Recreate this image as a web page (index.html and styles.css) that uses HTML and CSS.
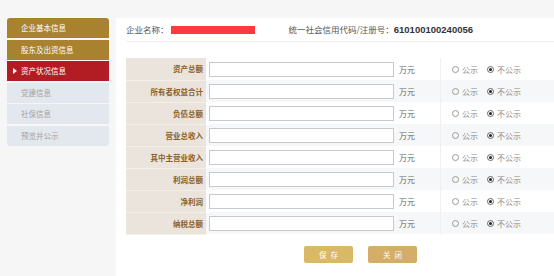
FILE: index.html
```html
<!DOCTYPE html>
<html lang="zh-CN">
<head>
    <meta charset="UTF-8">
    <title>资产状况信息</title>
    <link rel="stylesheet" href="styles.css">
</head>
<body>
    <div class="page">
        <ul class="side-menu">
            <li class="menu-item done">企业基本信息</li>
            <li class="menu-item done">股东及出资信息</li>
            <li class="menu-item active">资产状况信息</li>
            <li class="menu-item">党建信息</li>
            <li class="menu-item">社保信息</li>
            <li class="menu-item">预览并公示</li>
        </ul>
        <div class="main">
            <div class="info-bar">
                <span class="label">企业名称：</span><span class="masked"></span>
                <span class="label code-label">统一社会信用代码/注册号：</span><span class="code">610100100240056</span>
            </div>
            <table class="asset-table">
                <tr>
                    <th>资产总额</th>
                    <td class="amount"><input type="text"><span class="unit">万元</span></td>
                    <td class="publish"><span class="radio"></span>公示<span class="radio checked"></span>不公示</td>
                </tr>
                <tr>
                    <th>所有者权益合计</th>
                    <td class="amount"><input type="text"><span class="unit">万元</span></td>
                    <td class="publish"><span class="radio"></span>公示<span class="radio checked"></span>不公示</td>
                </tr>
                <tr>
                    <th>负债总额</th>
                    <td class="amount"><input type="text"><span class="unit">万元</span></td>
                    <td class="publish"><span class="radio"></span>公示<span class="radio checked"></span>不公示</td>
                </tr>
                <tr>
                    <th>营业总收入</th>
                    <td class="amount"><input type="text"><span class="unit">万元</span></td>
                    <td class="publish"><span class="radio"></span>公示<span class="radio checked"></span>不公示</td>
                </tr>
                <tr>
                    <th>其中主营业收入</th>
                    <td class="amount"><input type="text"><span class="unit">万元</span></td>
                    <td class="publish"><span class="radio"></span>公示<span class="radio checked"></span>不公示</td>
                </tr>
                <tr>
                    <th>利润总额</th>
                    <td class="amount"><input type="text"><span class="unit">万元</span></td>
                    <td class="publish"><span class="radio"></span>公示<span class="radio checked"></span>不公示</td>
                </tr>
                <tr>
                    <th>净利润</th>
                    <td class="amount"><input type="text"><span class="unit">万元</span></td>
                    <td class="publish"><span class="radio"></span>公示<span class="radio checked"></span>不公示</td>
                </tr>
                <tr>
                    <th>纳税总额</th>
                    <td class="amount"><input type="text"><span class="unit">万元</span></td>
                    <td class="publish"><span class="radio"></span>公示<span class="radio checked"></span>不公示</td>
                </tr>
            </table>
            <div class="actions">
                <button class="btn btn-save">保存</button>
                <button class="btn btn-close">关闭</button>
            </div>
        </div>
    </div>
</body>
</html>
```

FILE: styles.css
```css
html, body {
    margin: 0;
    height: 100%;
    overflow: hidden;
}

body {
    font-family: "Noto Sans CJK SC", "Liberation Sans", sans-serif;
    background: #f6f6f6;
    color: #555;
}

.page {
    display: flex;
    align-items: flex-start;
    padding: 18px 0 0 7px;
    height: 100%;
    box-sizing: border-box;
}

.side-menu {
    list-style: none;
    margin: 0 7px 0 0;
    padding: 0;
    width: 102px;
    flex-shrink: 0;
    border-radius: 3px;
    overflow: hidden;
}

.menu-item {
    height: 20px;
    line-height: 20px;
    margin-bottom: 1.5px;
    padding-left: 14px;
    font-size: 7.5px;
    background: #e3e7ee;
    color: #a3a3a3;
    position: relative;
}

.menu-item:last-child {
    margin-bottom: 0;
}

.menu-item.done {
    background: #a9822f;
    color: #fff;
}

.menu-item.active {
    background: #b11d22;
    color: #fff;
}

.menu-item.active::before {
    content: "";
    position: absolute;
    left: 6px;
    top: 7px;
    border-left: 4px solid #fff;
    border-top: 3px solid transparent;
    border-bottom: 3px solid transparent;
}

.main {
    flex: 1;
    background: #fff;
    height: 100%;
    padding-left: 10px;
    overflow: hidden;
}

.info-bar {
    height: 23px;
    line-height: 23px;
    border-bottom: 1px solid #eeeeee;
    font-size: 8.5px;
    white-space: nowrap;
    color: #555;
}

.masked {
    display: inline-block;
    width: 84px;
    height: 8px;
    background: #ff3a3a;
    vertical-align: -1px;
    margin-left: 2px;
}

.code-label {
    margin-left: 32px;
}

.code {
    font-family: "Liberation Sans", sans-serif;
    font-weight: bold;
    font-size: 9.5px;
    color: #333;
}

.asset-table {
    margin-top: 16px;
    border-collapse: collapse;
    table-layout: fixed;
    width: 469px;
    font-size: 8px;
}

.asset-table tr {
    height: 22px;
}

.asset-table tr:nth-child(even) td {
    background: #f6f7f9;
}

.asset-table th {
    width: 77px;
    padding: 0 3px 0 0;
    text-align: right;
    background: #ebe4dc;
    color: #8a6128;
    font-size: 7.5px;
    border-bottom: 1px solid #f4efe9;
}

.asset-table td {
    padding: 0;
}

.amount {
    width: 231px;
    padding-left: 3px !important;
    border-right: 1px solid #efefef;
    white-space: nowrap;
}

.amount input {
    width: 185px;
    height: 15px;
    box-sizing: border-box;
    border: 1px solid #c9c9c9;
    margin: 1px 0 0 0;
    padding: 0;
    vertical-align: middle;
}

.unit {
    margin-left: 5px;
    color: #666;
    vertical-align: middle;
}

.publish {
    padding-left: 11px !important;
    color: #888;
    white-space: nowrap;
}

.radio {
    display: inline-block;
    width: 5px;
    height: 5px;
    border: 1px solid #999;
    border-radius: 50%;
    margin-right: 3px;
    vertical-align: -0.5px;
    position: relative;
}

.radio.checked {
    margin-left: 9px;
    border-color: #666;
}

.radio.checked::after {
    content: "";
    position: absolute;
    left: 1px;
    top: 1px;
    width: 3px;
    height: 3px;
    border-radius: 50%;
    background: #222;
}

.actions {
    width: 469px;
    display: flex;
    justify-content: center;
    gap: 15px;
    margin-top: 11px;
}

.btn {
    width: 49px;
    height: 17px;
    border: none;
    border-radius: 2px;
    color: #fff;
    font-family: "Noto Sans CJK SC", sans-serif;
    font-size: 7.5px;
    letter-spacing: 4px;
    padding: 0 0 0 4px;
    cursor: pointer;
}

.btn-save {
    background: #d9b866;
}

.btn-close {
    background: #d4ad68;
}
```
